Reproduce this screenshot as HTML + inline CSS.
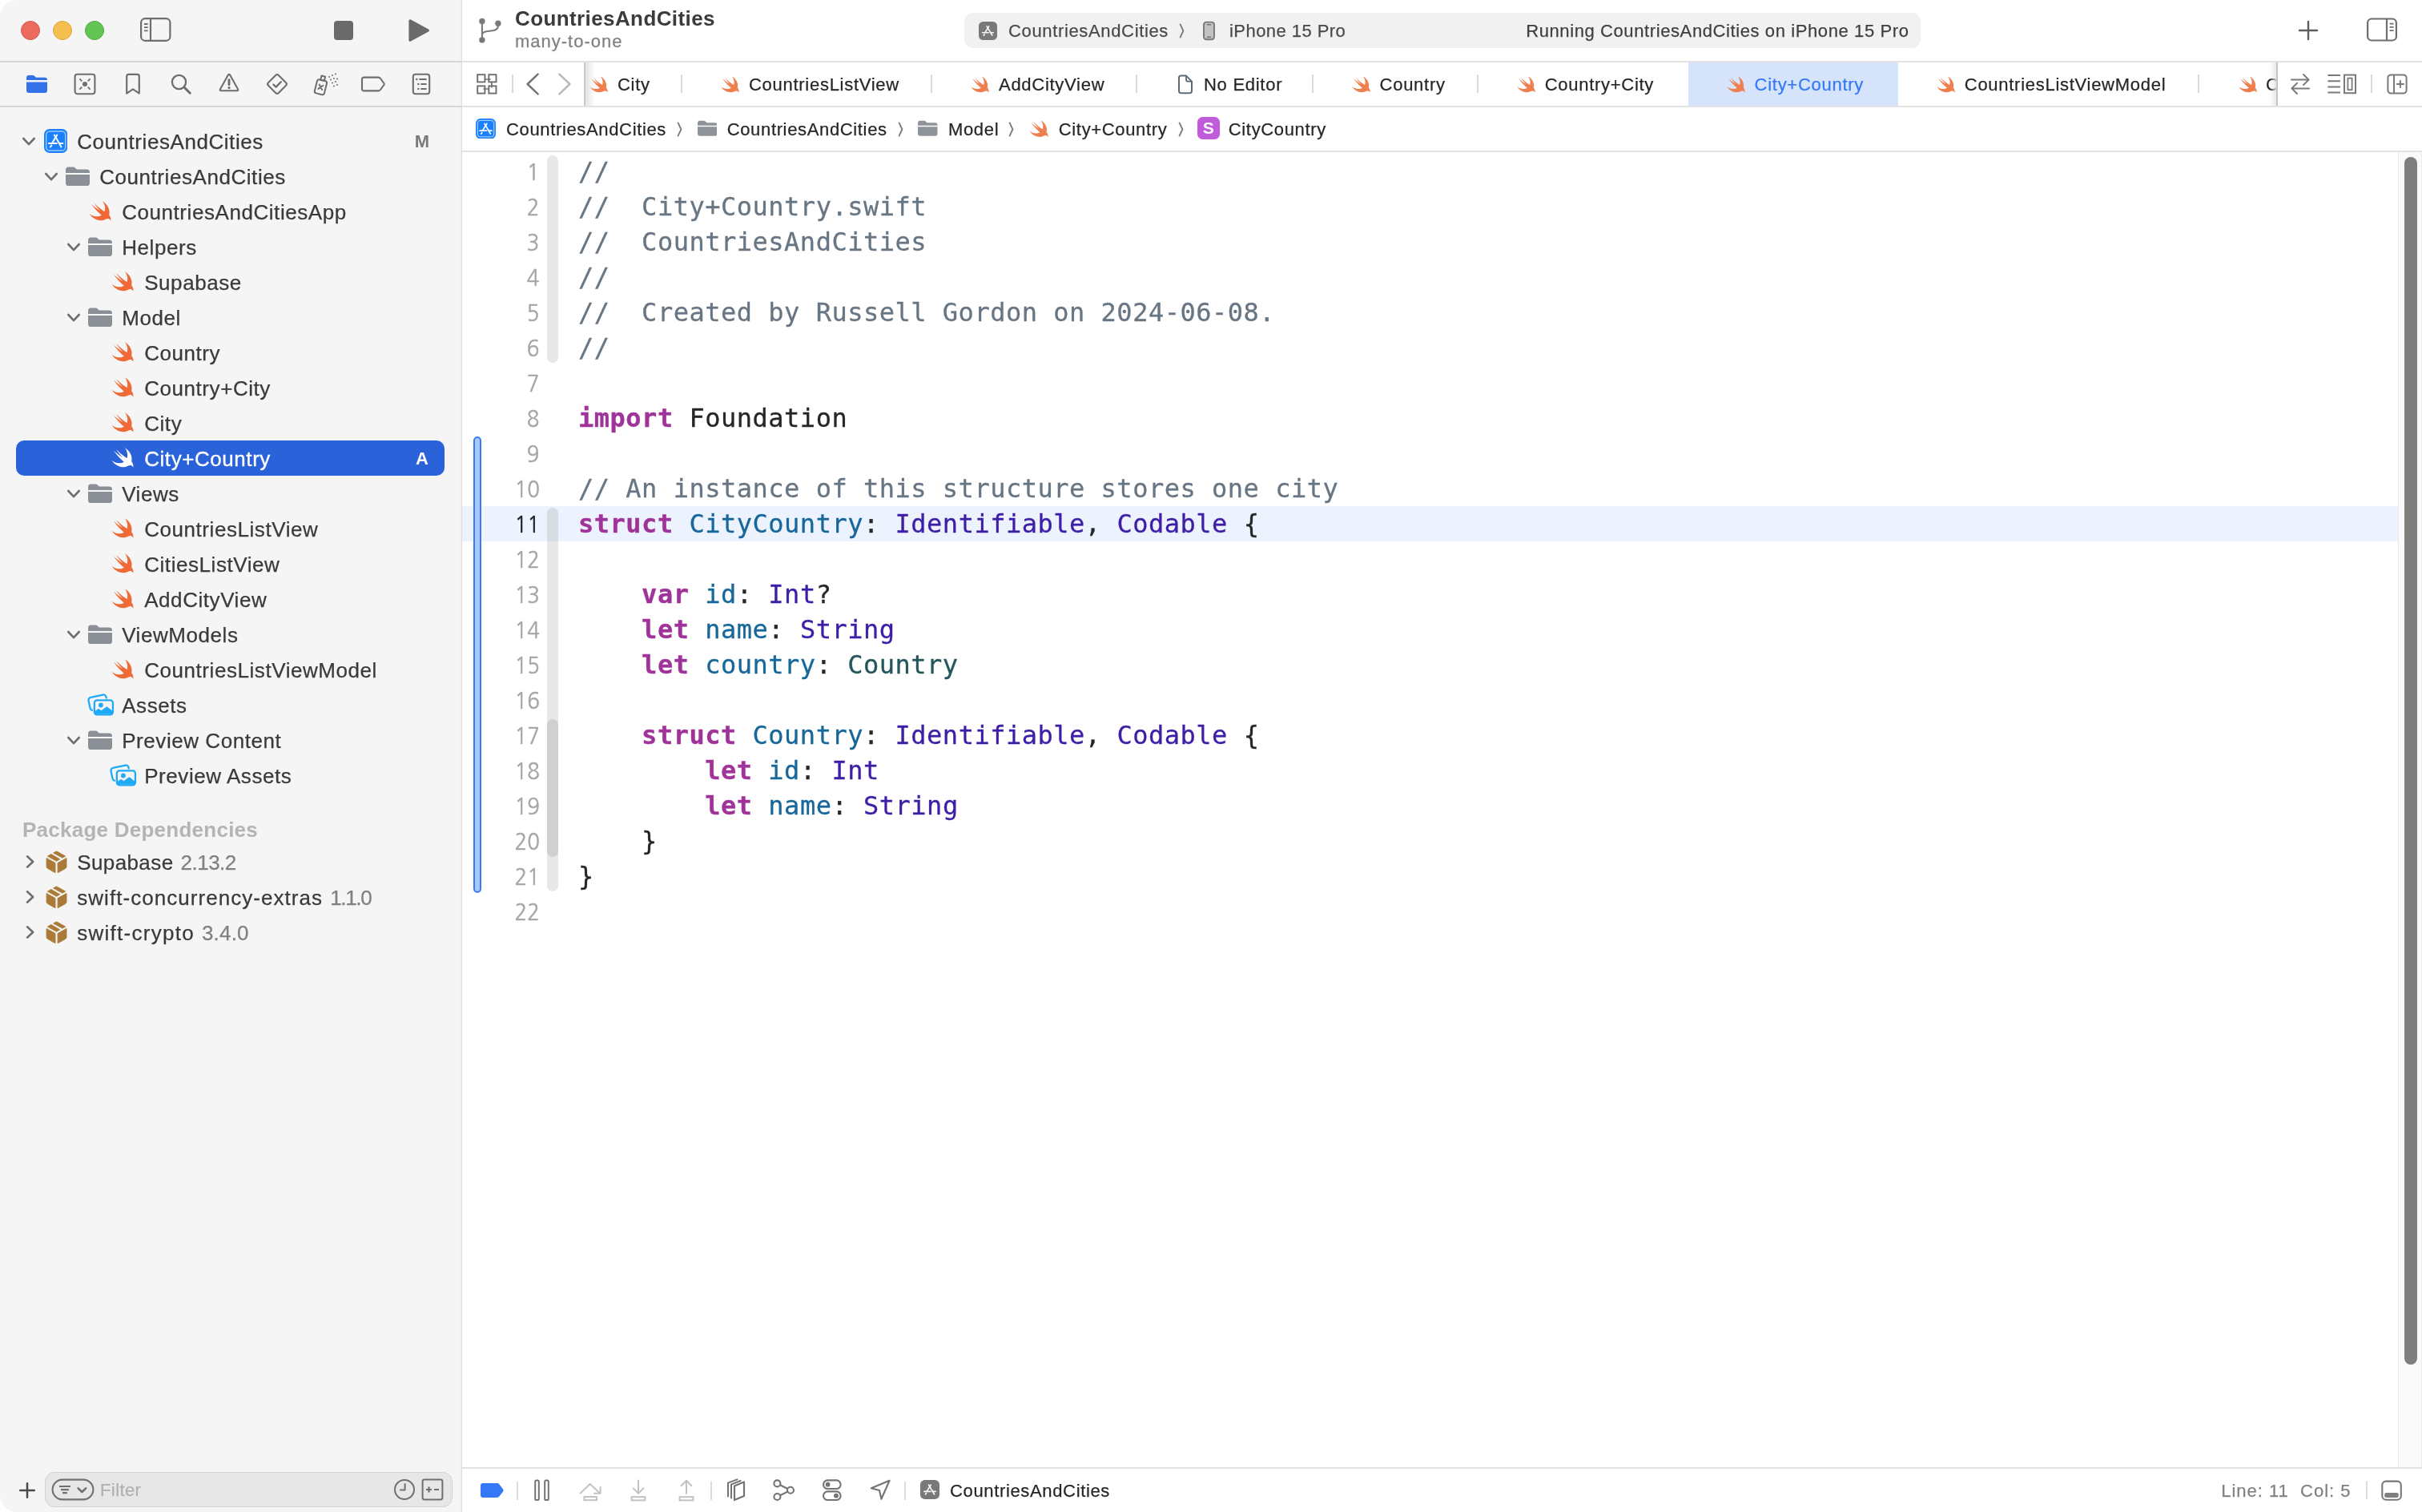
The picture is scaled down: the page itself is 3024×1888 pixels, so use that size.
<!DOCTYPE html>
<html><head><meta charset="utf-8"><title>CountriesAndCities — City+Country.swift</title>
<style>
html,body{margin:0;padding:0;background:#fff;}
body{width:3024px;height:1888px;position:relative;overflow:hidden;font-family:"Liberation Sans", "DejaVu Sans", sans-serif;}
#w{left:0;top:0;width:3024px;height:1888px;will-change:transform;}
div,span.t,svg{position:absolute;}
span.t{white-space:pre;-webkit-text-stroke:0.25px;}
.code{position:absolute;left:722px;height:44px;line-height:44px;font-family:"DejaVu Sans Mono", "Liberation Mono", monospace;font-size:32px;letter-spacing:0.51px;white-space:pre;color:#262626;-webkit-text-stroke:0.3px;}
.code b{font-weight:700;color:#a0339a;}
.c{color:#687683;} .d{color:#17679a;} .s{color:#3e1ea6;} .p{color:#23575c;}
.ln{position:absolute;right:2350.3px;height:44px;line-height:44px;font-family:"NanumGothic","Liberation Sans",sans-serif;font-size:28.7px;letter-spacing:0.2px;color:#a6a6a6;-webkit-text-stroke:0.55px;transform:scaleX(.9);transform-origin:100% 50%;}
</style></head><body><div id="w">

<div style="left:0px;top:0px;width:576px;height:1888px;background:linear-gradient(90deg,#f5f5f5 0,#f5f5f5 574px,#f0f0f0 576px);border-radius:21px 0 0 21px;"></div>
<div style="left:576px;top:0px;width:1px;height:1888px;background:#dedede;"></div>
<div style="left:0px;top:76px;width:576px;height:2px;background:#d5d5d5;"></div>
<div style="left:0px;top:132px;width:576px;height:2px;background:#d5d5d5;"></div>
<div style="left:577px;top:76px;width:2447px;height:2px;background:#e2e2e2;"></div>
<div style="left:577px;top:132px;width:2447px;height:2px;background:#e2e2e2;"></div>
<div style="left:577px;top:188px;width:2447px;height:2px;background:#e2e2e2;"></div>
<div style="left:577px;top:1832px;width:2447px;height:2px;background:#e2e2e2;"></div>
<div style="left:26px;top:26px;width:24px;height:24px;box-sizing:border-box;border-radius:50%;background:#ed6a5e;border:1px solid #d5564a;"></div>
<div style="left:66px;top:26px;width:24px;height:24px;box-sizing:border-box;border-radius:50%;background:#f5bf4f;border:1px solid #d9a33b;"></div>
<div style="left:106px;top:26px;width:24px;height:24px;box-sizing:border-box;border-radius:50%;background:#62c554;border:1px solid #4fa83e;"></div>
<svg style="left:174px;top:21px;" width="40" height="32" viewBox="0 0 40 32" ><g fill="none" stroke="#6e6e6e" stroke-width="2.2"><rect x="2.1" y="2.2" width="36.3" height="27.6" rx="5"/><path d="M14 2.2 V29.8"/><path d="M6 9 H10.6 M6 13.2 H10.6 M6 17.4 H10.6" stroke-width="1.8"/></g></svg>
<div style="left:417px;top:26px;width:24px;height:24px;background:#6a6a6a;border-radius:4px;"></div>
<svg style="left:506px;top:20px;" width="36" height="36" viewBox="0 0 36 36" ><path d="M6.1 5.9 L28.2 18 L6.1 30.1 Z" fill="#6a6a6a" stroke="#6a6a6a" stroke-width="3.4" stroke-linejoin="round"/></svg>
<svg style="left:33px;top:93px;" width="26" height="24" viewBox="0 0 26 24" ><path d="M0 4 Q0 1 3 1 L7.6 1 Q9.2 1 10.2 2 L11.4 3.2 Q12 3.8 13 3.8 L23 3.8 Q26 3.8 26 6.8 L26 7 L0 7 Z" fill="#3372e8"/><path d="M0 9.4 H26 V20 Q26 23 23 23 H3 Q0 23 0 20 Z" fill="#3372e8"/></svg>
<svg style="left:92px;top:91px;" width="28" height="28" viewBox="0 0 28 28" ><g fill="none" stroke="#6e6e6e" stroke-width="2.1" stroke-linecap="round"><rect x="1.6" y="1.8" width="24.8" height="24.4" rx="3"/><path d="M7.4 7.4 L10.3 10.3 M20.6 7.4 L17.7 10.3 M7.4 20.6 L10.3 17.7 M20.6 20.6 L17.7 17.7" stroke-width="1.8" stroke-linecap="butt"/></g><circle cx="14" cy="14" r="3" fill="#6e6e6e"/></svg>
<svg style="left:156px;top:91px;" width="20" height="28" viewBox="0 0 20 28" ><path d="M2.2 4.4 Q2.2 1.9 4.7 1.9 H15.3 Q17.8 1.9 17.8 4.4 V25.6 L10 20.4 L2.2 25.6 Z" fill="none" stroke="#6e6e6e" stroke-width="2.2" stroke-linejoin="round"/></svg>
<svg style="left:212px;top:91px;" width="28" height="28" viewBox="0 0 28 28" ><g fill="none" stroke="#6e6e6e" stroke-linecap="round"><circle cx="11.5" cy="11.5" r="8.6" stroke-width="2.3"/><path d="M18 18 L25.2 25.2" stroke-width="3"/></g></svg>
<svg style="left:272px;top:90px;" width="28" height="28" viewBox="0 0 28 28" ><path d="M12.9 3.6 Q14 1.8 15.1 3.6 L25 21.2 Q26 23.2 23.8 23.2 H4.2 Q2 23.2 3 21.2 Z" fill="none" stroke="#6e6e6e" stroke-width="2.1" stroke-linejoin="round"/><path d="M14 9.6 V15.8" stroke="#6e6e6e" stroke-width="2.9" stroke-linecap="round"/><circle cx="14" cy="19.6" r="1.6" fill="#6e6e6e"/></svg>
<svg style="left:331px;top:90px;" width="30" height="30" viewBox="0 0 30 30" ><g fill="none" stroke="#6e6e6e" stroke-width="2.1" stroke-linejoin="round" stroke-linecap="round"><rect x="5.9" y="5.9" width="18.2" height="18.2" rx="2.6" transform="rotate(45 15 15)"/><path d="M10.4 15.6 L13.6 18.6 L19.8 12.2" stroke-width="2.3"/></g></svg>
<svg style="left:390px;top:90px;" width="34" height="30" viewBox="0 0 34 30" ><g fill="none" stroke="#6e6e6e" stroke-width="2" stroke-linejoin="round" stroke-linecap="round"><g transform="rotate(14 10 18)"><rect x="4.4" y="10" width="12.4" height="17.4" rx="2.4"/><rect x="8.2" y="4.6" width="4.8" height="5.2"/><path d="M8.2 16 L13 21.4 M13 16 L8.2 21.4"/></g></g><g fill="#6e6e6e"><circle cx="21" cy="6" r="1"/><circle cx="25" cy="4" r="1"/><circle cx="29" cy="2.4" r="1"/><circle cx="23" cy="9.6" r="1"/><circle cx="27" cy="8" r="1"/><circle cx="31" cy="8.4" r="1"/><circle cx="25" cy="13.4" r="1"/><circle cx="29" cy="12" r="1"/><circle cx="27" cy="17.4" r="1"/><circle cx="31" cy="16" r="1"/></g></svg>
<svg style="left:450px;top:94px;" width="32" height="22" viewBox="0 0 32 22" ><path d="M4.4 2.6 H22.4 Q24 2.6 25 4 L29.4 10 Q30 11 29.4 12 L25 18 Q24 19.4 22.4 19.4 H4.4 Q2 19.4 2 17 V5 Q2 2.6 4.4 2.6 Z" fill="none" stroke="#6e6e6e" stroke-width="2.1" stroke-linejoin="round"/></svg>
<svg style="left:514px;top:91px;" width="24" height="28" viewBox="0 0 24 28" ><g fill="none" stroke="#6e6e6e" stroke-width="2.1" stroke-linecap="round"><rect x="1.8" y="1.8" width="20.4" height="24.4" rx="3"/><path d="M10.2 8 H17.8 M12.2 14 H17.8 M12.2 20 H17.8" stroke-width="2.2"/></g><g fill="#6e6e6e"><rect x="5.2" y="6.9" width="2.2" height="2.2"/><rect x="7.2" y="12.9" width="2.2" height="2.2"/><rect x="7.2" y="18.9" width="2.2" height="2.2"/></g></svg>
<svg style="left:27px;top:171px;" width="18" height="12" viewBox="0 0 18 12" ><path d="M2.3 2 L9 9.2 L15.7 2" fill="none" stroke="#6e6e6e" stroke-width="2.6" stroke-linecap="round" stroke-linejoin="round"/></svg>
<svg style="left:54.8px;top:160.9px;" width="29.4" height="30.0" viewBox="0 0 29.4 30" preserveAspectRatio="none"><rect x="0" y="0" width="29.4" height="30" rx="7" fill="#1a80fb"/><rect x="2.7" y="2.9" width="24" height="24.2" rx="4.4" fill="none" stroke="#ffffff" stroke-width="1.5" opacity="0.56"/><g stroke="#ffffff" stroke-width="2.05" stroke-linecap="round" fill="none" opacity="0.96"><path d="M16.2 7.6 L10.5 17"/><path d="M9.2 20.6 L8 22.5"/><path d="M12.9 7.6 L21.5 22.4"/><path d="M5.9 18 H15.8 M19 18 H23.4"/></g></svg>
<span class="t" style="left:96.2px;top:159.8px;font-size:26px;line-height:34px;color:#3a3a3a;font-weight:400;letter-spacing:0.56px;">CountriesAndCities</span>
<span class="t" style="right:2488px;top:161.5px;font-size:22px;line-height:29px;color:#7a7a7a;font-weight:700;letter-spacing:0px;-webkit-text-stroke:0;">M</span>
<svg style="left:55px;top:215px;" width="18" height="12" viewBox="0 0 18 12" ><path d="M2.3 2 L9 9.2 L15.7 2" fill="none" stroke="#6e6e6e" stroke-width="2.6" stroke-linecap="round" stroke-linejoin="round"/></svg>
<svg style="left:82px;top:208px;" width="30" height="24" viewBox="0 0 30 24" ><path d="M0 4.2 Q0 0.6 3.6 0.6 L9.2 0.6 Q11 0.6 12.2 1.9 L13.2 3 Q13.8 3.6 14.8 3.6 L26.4 3.6 Q30 3.6 30 7.2 L30 8 L0 8 Z" fill="#8a9096"/><path d="M0 10 L30 10 L30 20.4 Q30 24 26.4 24 L3.6 24 Q0 24 0 20.4 Z" fill="#8a9096"/></svg>
<span class="t" style="left:124.2px;top:203.8px;font-size:26px;line-height:34px;color:#3a3a3a;font-weight:400;letter-spacing:0.56px;">CountriesAndCities</span>
<svg style="left:111px;top:251px;overflow:visible;" width="28" height="25" viewBox="2.3 3.3 18.5 16.7" ><path d="M13.543 3.41c4.114 2.47 6.545 7.162 5.549 11.131-.024.093-.05.181-.076.272l.002.001c2.062 2.538 1.5 5.258 1.236 4.745-1.072-2.086-3.066-1.568-4.088-1.043a6.803 6.803 0 0 1-.281.158l-.02.012-.002.002c-2.115 1.123-4.957 1.205-7.812-.022a12.568 12.568 0 0 1-5.64-4.838c.649.48 1.35.902 2.097 1.252 3.019 1.414 6.051 1.311 8.197-.002C9.651 12.73 7.101 9.67 5.146 7.191a10.628 10.628 0 0 1-1.005-1.384c2.34 2.142 6.038 4.83 7.365 5.576C8.69 8.408 6.208 4.743 6.324 4.86c4.436 4.47 8.528 6.996 8.528 6.996.154.085.27.154.36.213.085-.215.16-.437.224-.668.708-2.588-.09-5.548-1.893-7.992z" fill="#f06a37"/></svg>
<span class="t" style="left:152.2px;top:247.8px;font-size:26px;line-height:34px;color:#3a3a3a;font-weight:400;letter-spacing:0.56px;">CountriesAndCitiesApp</span>
<svg style="left:83px;top:303px;" width="18" height="12" viewBox="0 0 18 12" ><path d="M2.3 2 L9 9.2 L15.7 2" fill="none" stroke="#6e6e6e" stroke-width="2.6" stroke-linecap="round" stroke-linejoin="round"/></svg>
<svg style="left:110px;top:296px;" width="30" height="24" viewBox="0 0 30 24" ><path d="M0 4.2 Q0 0.6 3.6 0.6 L9.2 0.6 Q11 0.6 12.2 1.9 L13.2 3 Q13.8 3.6 14.8 3.6 L26.4 3.6 Q30 3.6 30 7.2 L30 8 L0 8 Z" fill="#8a9096"/><path d="M0 10 L30 10 L30 20.4 Q30 24 26.4 24 L3.6 24 Q0 24 0 20.4 Z" fill="#8a9096"/></svg>
<span class="t" style="left:152.2px;top:291.8px;font-size:26px;line-height:34px;color:#3a3a3a;font-weight:400;letter-spacing:0.56px;">Helpers</span>
<svg style="left:139px;top:339px;overflow:visible;" width="28" height="25" viewBox="2.3 3.3 18.5 16.7" ><path d="M13.543 3.41c4.114 2.47 6.545 7.162 5.549 11.131-.024.093-.05.181-.076.272l.002.001c2.062 2.538 1.5 5.258 1.236 4.745-1.072-2.086-3.066-1.568-4.088-1.043a6.803 6.803 0 0 1-.281.158l-.02.012-.002.002c-2.115 1.123-4.957 1.205-7.812-.022a12.568 12.568 0 0 1-5.64-4.838c.649.48 1.35.902 2.097 1.252 3.019 1.414 6.051 1.311 8.197-.002C9.651 12.73 7.101 9.67 5.146 7.191a10.628 10.628 0 0 1-1.005-1.384c2.34 2.142 6.038 4.83 7.365 5.576C8.69 8.408 6.208 4.743 6.324 4.86c4.436 4.47 8.528 6.996 8.528 6.996.154.085.27.154.36.213.085-.215.16-.437.224-.668.708-2.588-.09-5.548-1.893-7.992z" fill="#f06a37"/></svg>
<span class="t" style="left:180.2px;top:335.8px;font-size:26px;line-height:34px;color:#3a3a3a;font-weight:400;letter-spacing:0.56px;">Supabase</span>
<svg style="left:83px;top:391px;" width="18" height="12" viewBox="0 0 18 12" ><path d="M2.3 2 L9 9.2 L15.7 2" fill="none" stroke="#6e6e6e" stroke-width="2.6" stroke-linecap="round" stroke-linejoin="round"/></svg>
<svg style="left:110px;top:384px;" width="30" height="24" viewBox="0 0 30 24" ><path d="M0 4.2 Q0 0.6 3.6 0.6 L9.2 0.6 Q11 0.6 12.2 1.9 L13.2 3 Q13.8 3.6 14.8 3.6 L26.4 3.6 Q30 3.6 30 7.2 L30 8 L0 8 Z" fill="#8a9096"/><path d="M0 10 L30 10 L30 20.4 Q30 24 26.4 24 L3.6 24 Q0 24 0 20.4 Z" fill="#8a9096"/></svg>
<span class="t" style="left:152.2px;top:379.8px;font-size:26px;line-height:34px;color:#3a3a3a;font-weight:400;letter-spacing:0.56px;">Model</span>
<svg style="left:139px;top:427px;overflow:visible;" width="28" height="25" viewBox="2.3 3.3 18.5 16.7" ><path d="M13.543 3.41c4.114 2.47 6.545 7.162 5.549 11.131-.024.093-.05.181-.076.272l.002.001c2.062 2.538 1.5 5.258 1.236 4.745-1.072-2.086-3.066-1.568-4.088-1.043a6.803 6.803 0 0 1-.281.158l-.02.012-.002.002c-2.115 1.123-4.957 1.205-7.812-.022a12.568 12.568 0 0 1-5.64-4.838c.649.48 1.35.902 2.097 1.252 3.019 1.414 6.051 1.311 8.197-.002C9.651 12.73 7.101 9.67 5.146 7.191a10.628 10.628 0 0 1-1.005-1.384c2.34 2.142 6.038 4.83 7.365 5.576C8.69 8.408 6.208 4.743 6.324 4.86c4.436 4.47 8.528 6.996 8.528 6.996.154.085.27.154.36.213.085-.215.16-.437.224-.668.708-2.588-.09-5.548-1.893-7.992z" fill="#f06a37"/></svg>
<span class="t" style="left:180.2px;top:423.8px;font-size:26px;line-height:34px;color:#3a3a3a;font-weight:400;letter-spacing:0.56px;">Country</span>
<svg style="left:139px;top:471px;overflow:visible;" width="28" height="25" viewBox="2.3 3.3 18.5 16.7" ><path d="M13.543 3.41c4.114 2.47 6.545 7.162 5.549 11.131-.024.093-.05.181-.076.272l.002.001c2.062 2.538 1.5 5.258 1.236 4.745-1.072-2.086-3.066-1.568-4.088-1.043a6.803 6.803 0 0 1-.281.158l-.02.012-.002.002c-2.115 1.123-4.957 1.205-7.812-.022a12.568 12.568 0 0 1-5.64-4.838c.649.48 1.35.902 2.097 1.252 3.019 1.414 6.051 1.311 8.197-.002C9.651 12.73 7.101 9.67 5.146 7.191a10.628 10.628 0 0 1-1.005-1.384c2.34 2.142 6.038 4.83 7.365 5.576C8.69 8.408 6.208 4.743 6.324 4.86c4.436 4.47 8.528 6.996 8.528 6.996.154.085.27.154.36.213.085-.215.16-.437.224-.668.708-2.588-.09-5.548-1.893-7.992z" fill="#f06a37"/></svg>
<span class="t" style="left:180.2px;top:467.8px;font-size:26px;line-height:34px;color:#3a3a3a;font-weight:400;letter-spacing:0.56px;">Country+City</span>
<svg style="left:139px;top:515px;overflow:visible;" width="28" height="25" viewBox="2.3 3.3 18.5 16.7" ><path d="M13.543 3.41c4.114 2.47 6.545 7.162 5.549 11.131-.024.093-.05.181-.076.272l.002.001c2.062 2.538 1.5 5.258 1.236 4.745-1.072-2.086-3.066-1.568-4.088-1.043a6.803 6.803 0 0 1-.281.158l-.02.012-.002.002c-2.115 1.123-4.957 1.205-7.812-.022a12.568 12.568 0 0 1-5.64-4.838c.649.48 1.35.902 2.097 1.252 3.019 1.414 6.051 1.311 8.197-.002C9.651 12.73 7.101 9.67 5.146 7.191a10.628 10.628 0 0 1-1.005-1.384c2.34 2.142 6.038 4.83 7.365 5.576C8.69 8.408 6.208 4.743 6.324 4.86c4.436 4.47 8.528 6.996 8.528 6.996.154.085.27.154.36.213.085-.215.16-.437.224-.668.708-2.588-.09-5.548-1.893-7.992z" fill="#f06a37"/></svg>
<span class="t" style="left:180.2px;top:511.79999999999995px;font-size:26px;line-height:34px;color:#3a3a3a;font-weight:400;letter-spacing:0.56px;">City</span>
<div style="left:20px;top:550px;width:535px;height:44px;background:#2962d9;border-radius:10px;"></div>
<svg style="left:139px;top:559px;overflow:visible;" width="28" height="25" viewBox="2.3 3.3 18.5 16.7" ><path d="M13.543 3.41c4.114 2.47 6.545 7.162 5.549 11.131-.024.093-.05.181-.076.272l.002.001c2.062 2.538 1.5 5.258 1.236 4.745-1.072-2.086-3.066-1.568-4.088-1.043a6.803 6.803 0 0 1-.281.158l-.02.012-.002.002c-2.115 1.123-4.957 1.205-7.812-.022a12.568 12.568 0 0 1-5.64-4.838c.649.48 1.35.902 2.097 1.252 3.019 1.414 6.051 1.311 8.197-.002C9.651 12.73 7.101 9.67 5.146 7.191a10.628 10.628 0 0 1-1.005-1.384c2.34 2.142 6.038 4.83 7.365 5.576C8.69 8.408 6.208 4.743 6.324 4.86c4.436 4.47 8.528 6.996 8.528 6.996.154.085.27.154.36.213.085-.215.16-.437.224-.668.708-2.588-.09-5.548-1.893-7.992z" fill="#ffffff"/></svg>
<span class="t" style="left:180.2px;top:555.8px;font-size:26px;line-height:34px;color:#ffffff;font-weight:400;letter-spacing:0.56px;-webkit-text-stroke:0.3px;">City+Country</span>
<span class="t" style="right:2489px;top:557.5px;font-size:22px;line-height:29px;color:#ffffff;font-weight:700;letter-spacing:0px;-webkit-text-stroke:0;">A</span>
<svg style="left:83px;top:611px;" width="18" height="12" viewBox="0 0 18 12" ><path d="M2.3 2 L9 9.2 L15.7 2" fill="none" stroke="#6e6e6e" stroke-width="2.6" stroke-linecap="round" stroke-linejoin="round"/></svg>
<svg style="left:110px;top:604px;" width="30" height="24" viewBox="0 0 30 24" ><path d="M0 4.2 Q0 0.6 3.6 0.6 L9.2 0.6 Q11 0.6 12.2 1.9 L13.2 3 Q13.8 3.6 14.8 3.6 L26.4 3.6 Q30 3.6 30 7.2 L30 8 L0 8 Z" fill="#8a9096"/><path d="M0 10 L30 10 L30 20.4 Q30 24 26.4 24 L3.6 24 Q0 24 0 20.4 Z" fill="#8a9096"/></svg>
<span class="t" style="left:152.2px;top:599.8px;font-size:26px;line-height:34px;color:#3a3a3a;font-weight:400;letter-spacing:0.56px;">Views</span>
<svg style="left:139px;top:647px;overflow:visible;" width="28" height="25" viewBox="2.3 3.3 18.5 16.7" ><path d="M13.543 3.41c4.114 2.47 6.545 7.162 5.549 11.131-.024.093-.05.181-.076.272l.002.001c2.062 2.538 1.5 5.258 1.236 4.745-1.072-2.086-3.066-1.568-4.088-1.043a6.803 6.803 0 0 1-.281.158l-.02.012-.002.002c-2.115 1.123-4.957 1.205-7.812-.022a12.568 12.568 0 0 1-5.64-4.838c.649.48 1.35.902 2.097 1.252 3.019 1.414 6.051 1.311 8.197-.002C9.651 12.73 7.101 9.67 5.146 7.191a10.628 10.628 0 0 1-1.005-1.384c2.34 2.142 6.038 4.83 7.365 5.576C8.69 8.408 6.208 4.743 6.324 4.86c4.436 4.47 8.528 6.996 8.528 6.996.154.085.27.154.36.213.085-.215.16-.437.224-.668.708-2.588-.09-5.548-1.893-7.992z" fill="#f06a37"/></svg>
<span class="t" style="left:180.2px;top:643.8px;font-size:26px;line-height:34px;color:#3a3a3a;font-weight:400;letter-spacing:0.56px;">CountriesListView</span>
<svg style="left:139px;top:691px;overflow:visible;" width="28" height="25" viewBox="2.3 3.3 18.5 16.7" ><path d="M13.543 3.41c4.114 2.47 6.545 7.162 5.549 11.131-.024.093-.05.181-.076.272l.002.001c2.062 2.538 1.5 5.258 1.236 4.745-1.072-2.086-3.066-1.568-4.088-1.043a6.803 6.803 0 0 1-.281.158l-.02.012-.002.002c-2.115 1.123-4.957 1.205-7.812-.022a12.568 12.568 0 0 1-5.64-4.838c.649.48 1.35.902 2.097 1.252 3.019 1.414 6.051 1.311 8.197-.002C9.651 12.73 7.101 9.67 5.146 7.191a10.628 10.628 0 0 1-1.005-1.384c2.34 2.142 6.038 4.83 7.365 5.576C8.69 8.408 6.208 4.743 6.324 4.86c4.436 4.47 8.528 6.996 8.528 6.996.154.085.27.154.36.213.085-.215.16-.437.224-.668.708-2.588-.09-5.548-1.893-7.992z" fill="#f06a37"/></svg>
<span class="t" style="left:180.2px;top:687.8px;font-size:26px;line-height:34px;color:#3a3a3a;font-weight:400;letter-spacing:0.56px;">CitiesListView</span>
<svg style="left:139px;top:735px;overflow:visible;" width="28" height="25" viewBox="2.3 3.3 18.5 16.7" ><path d="M13.543 3.41c4.114 2.47 6.545 7.162 5.549 11.131-.024.093-.05.181-.076.272l.002.001c2.062 2.538 1.5 5.258 1.236 4.745-1.072-2.086-3.066-1.568-4.088-1.043a6.803 6.803 0 0 1-.281.158l-.02.012-.002.002c-2.115 1.123-4.957 1.205-7.812-.022a12.568 12.568 0 0 1-5.64-4.838c.649.48 1.35.902 2.097 1.252 3.019 1.414 6.051 1.311 8.197-.002C9.651 12.73 7.101 9.67 5.146 7.191a10.628 10.628 0 0 1-1.005-1.384c2.34 2.142 6.038 4.83 7.365 5.576C8.69 8.408 6.208 4.743 6.324 4.86c4.436 4.47 8.528 6.996 8.528 6.996.154.085.27.154.36.213.085-.215.16-.437.224-.668.708-2.588-.09-5.548-1.893-7.992z" fill="#f06a37"/></svg>
<span class="t" style="left:180.2px;top:731.8px;font-size:26px;line-height:34px;color:#3a3a3a;font-weight:400;letter-spacing:0.56px;">AddCityView</span>
<svg style="left:83px;top:787px;" width="18" height="12" viewBox="0 0 18 12" ><path d="M2.3 2 L9 9.2 L15.7 2" fill="none" stroke="#6e6e6e" stroke-width="2.6" stroke-linecap="round" stroke-linejoin="round"/></svg>
<svg style="left:110px;top:780px;" width="30" height="24" viewBox="0 0 30 24" ><path d="M0 4.2 Q0 0.6 3.6 0.6 L9.2 0.6 Q11 0.6 12.2 1.9 L13.2 3 Q13.8 3.6 14.8 3.6 L26.4 3.6 Q30 3.6 30 7.2 L30 8 L0 8 Z" fill="#8a9096"/><path d="M0 10 L30 10 L30 20.4 Q30 24 26.4 24 L3.6 24 Q0 24 0 20.4 Z" fill="#8a9096"/></svg>
<span class="t" style="left:152.2px;top:775.8px;font-size:26px;line-height:34px;color:#3a3a3a;font-weight:400;letter-spacing:0.56px;">ViewModels</span>
<svg style="left:139px;top:823px;overflow:visible;" width="28" height="25" viewBox="2.3 3.3 18.5 16.7" ><path d="M13.543 3.41c4.114 2.47 6.545 7.162 5.549 11.131-.024.093-.05.181-.076.272l.002.001c2.062 2.538 1.5 5.258 1.236 4.745-1.072-2.086-3.066-1.568-4.088-1.043a6.803 6.803 0 0 1-.281.158l-.02.012-.002.002c-2.115 1.123-4.957 1.205-7.812-.022a12.568 12.568 0 0 1-5.64-4.838c.649.48 1.35.902 2.097 1.252 3.019 1.414 6.051 1.311 8.197-.002C9.651 12.73 7.101 9.67 5.146 7.191a10.628 10.628 0 0 1-1.005-1.384c2.34 2.142 6.038 4.83 7.365 5.576C8.69 8.408 6.208 4.743 6.324 4.86c4.436 4.47 8.528 6.996 8.528 6.996.154.085.27.154.36.213.085-.215.16-.437.224-.668.708-2.588-.09-5.548-1.893-7.992z" fill="#f06a37"/></svg>
<span class="t" style="left:180.2px;top:819.8px;font-size:26px;line-height:34px;color:#3a3a3a;font-weight:400;letter-spacing:0.56px;">CountriesListViewModel</span>
<svg style="left:109px;top:865.5px;" width="34" height="28" viewBox="0 0 34 28" ><rect x="2.3" y="3.0" width="22.4" height="16.4" rx="3.3" fill="none" stroke="#1faaf6" stroke-width="2.3" transform="rotate(-12 13.5 11.2)"/><rect x="6.9" y="6.5" width="27" height="22" rx="5" fill="#f5f5f5"/><rect x="8.85" y="8.45" width="23.1" height="17.9" rx="3.3" fill="#f5f5f5" stroke="#1faaf6" stroke-width="2.3"/><circle cx="16.9" cy="14.5" r="2.9" fill="#1faaf6"/><path d="M9.6 22 L13.4 19.2 Q14.1 18.7 14.8 19.2 L17.4 21.2 L23.6 16.8 Q24.4 16.2 25.2 16.8 L31.2 21.4 V25.6 H9.6 Z" fill="#1faaf6"/></svg>
<span class="t" style="left:152.2px;top:863.8px;font-size:26px;line-height:34px;color:#3a3a3a;font-weight:400;letter-spacing:0.56px;">Assets</span>
<svg style="left:83px;top:919px;" width="18" height="12" viewBox="0 0 18 12" ><path d="M2.3 2 L9 9.2 L15.7 2" fill="none" stroke="#6e6e6e" stroke-width="2.6" stroke-linecap="round" stroke-linejoin="round"/></svg>
<svg style="left:110px;top:912px;" width="30" height="24" viewBox="0 0 30 24" ><path d="M0 4.2 Q0 0.6 3.6 0.6 L9.2 0.6 Q11 0.6 12.2 1.9 L13.2 3 Q13.8 3.6 14.8 3.6 L26.4 3.6 Q30 3.6 30 7.2 L30 8 L0 8 Z" fill="#8a9096"/><path d="M0 10 L30 10 L30 20.4 Q30 24 26.4 24 L3.6 24 Q0 24 0 20.4 Z" fill="#8a9096"/></svg>
<span class="t" style="left:152.2px;top:907.8px;font-size:26px;line-height:34px;color:#3a3a3a;font-weight:400;letter-spacing:0.56px;">Preview Content</span>
<svg style="left:137px;top:953.5px;" width="34" height="28" viewBox="0 0 34 28" ><rect x="2.3" y="3.0" width="22.4" height="16.4" rx="3.3" fill="none" stroke="#1faaf6" stroke-width="2.3" transform="rotate(-12 13.5 11.2)"/><rect x="6.9" y="6.5" width="27" height="22" rx="5" fill="#f5f5f5"/><rect x="8.85" y="8.45" width="23.1" height="17.9" rx="3.3" fill="#f5f5f5" stroke="#1faaf6" stroke-width="2.3"/><circle cx="16.9" cy="14.5" r="2.9" fill="#1faaf6"/><path d="M9.6 22 L13.4 19.2 Q14.1 18.7 14.8 19.2 L17.4 21.2 L23.6 16.8 Q24.4 16.2 25.2 16.8 L31.2 21.4 V25.6 H9.6 Z" fill="#1faaf6"/></svg>
<span class="t" style="left:180.2px;top:951.8px;font-size:26px;line-height:34px;color:#3a3a3a;font-weight:400;letter-spacing:0.56px;">Preview Assets</span>
<span class="t" style="left:28px;top:1018.5px;font-size:26px;line-height:34px;color:#b4b4b4;font-weight:700;letter-spacing:0.25px;-webkit-text-stroke:0;">Package Dependencies</span>
<svg style="left:31.9px;top:1066.5px;" width="12" height="18" viewBox="0 0 12 18" ><path d="M2 2.3 L9.2 9 L2 15.7" fill="none" stroke="#6e6e6e" stroke-width="2.6" stroke-linecap="round" stroke-linejoin="round"/></svg>
<svg style="left:56.5px;top:1061.5px;" width="27" height="29" viewBox="0 0 27 29" ><g fill="#ab7a39" stroke="#ab7a39" stroke-width="0.9" stroke-linejoin="round"><path d="M1.1 9.5 L12 15.6 V27.8 L2.6 22.6 Q1.1 21.7 1.1 20.2 Z"/><path d="M26 9.5 L15.1 15.6 V27.8 L24.5 22.6 Q26 21.7 26 20.2 Z"/><path d="M9.6 3 L12.4 1.4 Q13.5 0.8 14.6 1.4 L24.7 7.1 L20.9 9.2 Z"/><path d="M2.3 7.1 L6.9 4.5 L17.8 10.9 L13.5 13.3 Z"/></g></svg>
<span class="t" style="left:96.2px;top:1059.8px;font-size:26px;line-height:34px;color:#3a3a3a;letter-spacing:0.4px;">Supabase<span style="color:#808080;margin-left:9px;letter-spacing:-0.5px;">2.13.2</span></span>
<svg style="left:31.9px;top:1110.5px;" width="12" height="18" viewBox="0 0 12 18" ><path d="M2 2.3 L9.2 9 L2 15.7" fill="none" stroke="#6e6e6e" stroke-width="2.6" stroke-linecap="round" stroke-linejoin="round"/></svg>
<svg style="left:56.5px;top:1105.5px;" width="27" height="29" viewBox="0 0 27 29" ><g fill="#ab7a39" stroke="#ab7a39" stroke-width="0.9" stroke-linejoin="round"><path d="M1.1 9.5 L12 15.6 V27.8 L2.6 22.6 Q1.1 21.7 1.1 20.2 Z"/><path d="M26 9.5 L15.1 15.6 V27.8 L24.5 22.6 Q26 21.7 26 20.2 Z"/><path d="M9.6 3 L12.4 1.4 Q13.5 0.8 14.6 1.4 L24.7 7.1 L20.9 9.2 Z"/><path d="M2.3 7.1 L6.9 4.5 L17.8 10.9 L13.5 13.3 Z"/></g></svg>
<span class="t" style="left:96.2px;top:1103.8px;font-size:26px;line-height:34px;color:#3a3a3a;letter-spacing:1.05px;">swift-concurrency-extras<span style="color:#808080;margin-left:9px;letter-spacing:-1.3px;">1.1.0</span></span>
<svg style="left:31.9px;top:1154.5px;" width="12" height="18" viewBox="0 0 12 18" ><path d="M2 2.3 L9.2 9 L2 15.7" fill="none" stroke="#6e6e6e" stroke-width="2.6" stroke-linecap="round" stroke-linejoin="round"/></svg>
<svg style="left:56.5px;top:1149.5px;" width="27" height="29" viewBox="0 0 27 29" ><g fill="#ab7a39" stroke="#ab7a39" stroke-width="0.9" stroke-linejoin="round"><path d="M1.1 9.5 L12 15.6 V27.8 L2.6 22.6 Q1.1 21.7 1.1 20.2 Z"/><path d="M26 9.5 L15.1 15.6 V27.8 L24.5 22.6 Q26 21.7 26 20.2 Z"/><path d="M9.6 3 L12.4 1.4 Q13.5 0.8 14.6 1.4 L24.7 7.1 L20.9 9.2 Z"/><path d="M2.3 7.1 L6.9 4.5 L17.8 10.9 L13.5 13.3 Z"/></g></svg>
<span class="t" style="left:96.2px;top:1147.8px;font-size:26px;line-height:34px;color:#3a3a3a;letter-spacing:1.27px;">swift-crypto<span style="color:#808080;margin-left:9px;letter-spacing:0.2px;">3.4.0</span></span>
<svg style="left:21.4px;top:1847.5px;" width="26" height="26" viewBox="0 0 26 26" ><path d="M13 4.2 V21.8 M4.2 13 H21.8" stroke="#4a4a4a" stroke-width="2.5" stroke-linecap="round"/></svg>
<div style="left:56px;top:1838px;width:509px;height:44px;box-sizing:border-box;background:#e7e7e7;border:1.5px solid #d3d3d3;border-radius:12px;"></div>
<svg style="left:64px;top:1846px;" width="54" height="28" viewBox="0 0 54 28" ><g fill="none" stroke="#707070" stroke-width="2.1"><rect x="1.6" y="1.6" width="50.8" height="24.8" rx="12.4"/><path d="M10 10 H24 M12.1 14.1 H21.9 M14.1 18.2 H19.9" stroke-width="2.2"/><path d="M33.6 12.4 L38.4 17 L43.2 12.4" stroke-width="2.6" stroke-linecap="round" stroke-linejoin="round"/></g></svg>
<span class="t" style="left:125px;top:1845.5px;font-size:22px;line-height:29px;color:#b1b1b1;font-weight:400;letter-spacing:0.4px;">Filter</span>
<svg style="left:491px;top:1846px;" width="28" height="28" viewBox="0 0 28 28" ><g fill="none" stroke="#707070" stroke-width="2"><circle cx="14" cy="14" r="12"/><path d="M14.6 7 V14.6 H9" stroke-linecap="round" stroke-linejoin="round"/></g></svg>
<svg style="left:526px;top:1846px;" width="28" height="28" viewBox="0 0 28 28" ><g fill="none" stroke="#707070" stroke-width="2"><rect x="1.6" y="1.6" width="24.8" height="24.8" rx="2.4"/><path d="M6 14 H13 M9.5 10.5 V17.5 M16 14 H22" stroke-width="2.2"/></g></svg>
<svg style="left:596px;top:21px;" width="32" height="36" viewBox="0 0 32 36" ><g fill="none" stroke="#7a7a7a" stroke-width="2.1" stroke-linecap="round"><path d="M5.9 5.4 V28.9"/><path d="M25.9 8.2 V11 Q25.9 16.4 19 17.2 L11.5 18.2 Q5.9 19 5.9 23"/></g><g fill="#7a7a7a"><circle cx="5.9" cy="5.4" r="3.7"/><circle cx="25.9" cy="8.2" r="3.7"/><circle cx="5.9" cy="28.9" r="3.7"/></g></svg>
<span class="t" style="left:643px;top:5.5px;font-size:26px;line-height:34px;color:#3b3b3b;font-weight:700;letter-spacing:0.4px;-webkit-text-stroke:0;">CountriesAndCities</span>
<span class="t" style="left:643px;top:37.0px;font-size:22px;line-height:29px;color:#808080;font-weight:400;letter-spacing:1.0px;">many-to-one</span>
<div style="left:1204px;top:16px;width:1194px;height:44px;background:#f1f1f1;border-radius:11px;"></div>
<svg style="left:1222px;top:26.7px;" width="23" height="23" viewBox="0 0 29.4 30" preserveAspectRatio="none"><rect x="0" y="0" width="29.4" height="30" rx="7" fill="#797979"/><g stroke="#ffffff" stroke-width="2.05" stroke-linecap="round" fill="none" opacity="0.96"><path d="M16.2 7.6 L10.5 17"/><path d="M9.2 20.6 L8 22.5"/><path d="M12.9 7.6 L21.5 22.4"/><path d="M5.9 18 H15.8 M19 18 H23.4"/></g></svg>
<span class="t" style="left:1259px;top:23.9px;font-size:22px;line-height:29px;color:#4a4a4a;font-weight:400;letter-spacing:0.65px;">CountriesAndCities</span>
<svg style="left:1472.4px;top:28.9px;" width="8" height="19" viewBox="0 0 8 19" ><path d="M1.6 1.4 L5.4 9.5 L1.6 17.6" fill="none" stroke="#7d7d7d" stroke-width="1.9" stroke-linecap="round" stroke-linejoin="round"/></svg>
<svg style="left:1501px;top:26px;" width="17" height="25" viewBox="0 0 17 25" ><rect x="2" y="1.6" width="13" height="21.6" rx="3.2" fill="#c2c2c2" stroke="#787878" stroke-width="1.9"/><path d="M6.4 4.8 H10.6 M6.6 20.2 H10.4" stroke="#737373" stroke-width="1.5" stroke-linecap="round"/></svg>
<span class="t" style="left:1535px;top:23.9px;font-size:22px;line-height:29px;color:#4a4a4a;font-weight:400;letter-spacing:0.45px;">iPhone 15 Pro</span>
<span class="t" style="right:640.5px;top:23.9px;font-size:22px;line-height:29px;color:#3f3f3f;font-weight:400;letter-spacing:0.6px;">Running CountriesAndCities on iPhone 15 Pro</span>
<svg style="left:2869px;top:25px;" width="26" height="26" viewBox="0 0 26 26" ><path d="M13 2 V24 M2 13 H24" stroke="#5e5e5e" stroke-width="2.4" stroke-linecap="round"/></svg>
<svg style="left:2954px;top:21px;" width="40" height="32" viewBox="0 0 40 32" ><g fill="none" stroke="#6e6e6e" stroke-width="2.2"><rect x="2.1" y="2.5" width="35.8" height="27" rx="5"/><path d="M26 2.5 V29.5"/><path d="M29.6 8.6 H34.6 M29.6 12.9 H34.6 M29.6 17.2 H34.6" stroke-width="1.8"/></g></svg>
<svg style="left:594px;top:91px;" width="28" height="28" viewBox="0 0 28 28" ><g fill="none" stroke="#6e6e6e" stroke-width="1.9"><rect x="2.2" y="2.2" width="9.2" height="9.2"/><rect x="16.3" y="2.2" width="9.2" height="9.2"/><rect x="2.2" y="16.4" width="9.2" height="9.2"/><rect x="16.3" y="16.4" width="9.2" height="9.2"/><path d="M11.4 8 H18.6 M19.9 11.4 V18.4 M9.5 20 H16.3" stroke-width="1.7"/></g></svg>
<div style="left:639px;top:93px;width:2px;height:23px;background:#dadada;"></div>
<svg style="left:655px;top:90px;" width="20" height="30" viewBox="0 0 20 30" ><path d="M16.6 2.6 L3.6 15 L16.6 27.4" fill="none" stroke="#757575" stroke-width="2.5" stroke-linecap="round" stroke-linejoin="round"/></svg>
<svg style="left:695px;top:90px;" width="20" height="30" viewBox="0 0 20 30" ><path d="M3.4 2.6 L16.4 15 L3.4 27.4" fill="none" stroke="#b9b9b9" stroke-width="2.5" stroke-linecap="round" stroke-linejoin="round"/></svg>
<div style="left:2108px;top:78px;width:262px;height:54px;background:#d6e4fb;"></div>
<svg style="left:736px;top:95px;overflow:visible;" width="23" height="21" viewBox="2.3 3.3 18.5 16.7" ><path d="M13.543 3.41c4.114 2.47 6.545 7.162 5.549 11.131-.024.093-.05.181-.076.272l.002.001c2.062 2.538 1.5 5.258 1.236 4.745-1.072-2.086-3.066-1.568-4.088-1.043a6.803 6.803 0 0 1-.281.158l-.02.012-.002.002c-2.115 1.123-4.957 1.205-7.812-.022a12.568 12.568 0 0 1-5.64-4.838c.649.48 1.35.902 2.097 1.252 3.019 1.414 6.051 1.311 8.197-.002C9.651 12.73 7.101 9.67 5.146 7.191a10.628 10.628 0 0 1-1.005-1.384c2.34 2.142 6.038 4.83 7.365 5.576C8.69 8.408 6.208 4.743 6.324 4.86c4.436 4.47 8.528 6.996 8.528 6.996.154.085.27.154.36.213.085-.215.16-.437.224-.668.708-2.588-.09-5.548-1.893-7.992z" fill="#ef7f4e"/></svg>
<span class="t" style="left:771px;top:90.8px;font-size:22px;line-height:29px;color:#262626;font-weight:400;letter-spacing:0.72px;">City</span>
<svg style="left:900px;top:95px;overflow:visible;" width="23" height="21" viewBox="2.3 3.3 18.5 16.7" ><path d="M13.543 3.41c4.114 2.47 6.545 7.162 5.549 11.131-.024.093-.05.181-.076.272l.002.001c2.062 2.538 1.5 5.258 1.236 4.745-1.072-2.086-3.066-1.568-4.088-1.043a6.803 6.803 0 0 1-.281.158l-.02.012-.002.002c-2.115 1.123-4.957 1.205-7.812-.022a12.568 12.568 0 0 1-5.64-4.838c.649.48 1.35.902 2.097 1.252 3.019 1.414 6.051 1.311 8.197-.002C9.651 12.73 7.101 9.67 5.146 7.191a10.628 10.628 0 0 1-1.005-1.384c2.34 2.142 6.038 4.83 7.365 5.576C8.69 8.408 6.208 4.743 6.324 4.86c4.436 4.47 8.528 6.996 8.528 6.996.154.085.27.154.36.213.085-.215.16-.437.224-.668.708-2.588-.09-5.548-1.893-7.992z" fill="#ef7f4e"/></svg>
<span class="t" style="left:935px;top:90.8px;font-size:22px;line-height:29px;color:#262626;font-weight:400;letter-spacing:0.72px;">CountriesListView</span>
<svg style="left:1212px;top:95px;overflow:visible;" width="23" height="21" viewBox="2.3 3.3 18.5 16.7" ><path d="M13.543 3.41c4.114 2.47 6.545 7.162 5.549 11.131-.024.093-.05.181-.076.272l.002.001c2.062 2.538 1.5 5.258 1.236 4.745-1.072-2.086-3.066-1.568-4.088-1.043a6.803 6.803 0 0 1-.281.158l-.02.012-.002.002c-2.115 1.123-4.957 1.205-7.812-.022a12.568 12.568 0 0 1-5.64-4.838c.649.48 1.35.902 2.097 1.252 3.019 1.414 6.051 1.311 8.197-.002C9.651 12.73 7.101 9.67 5.146 7.191a10.628 10.628 0 0 1-1.005-1.384c2.34 2.142 6.038 4.83 7.365 5.576C8.69 8.408 6.208 4.743 6.324 4.86c4.436 4.47 8.528 6.996 8.528 6.996.154.085.27.154.36.213.085-.215.16-.437.224-.668.708-2.588-.09-5.548-1.893-7.992z" fill="#ef7f4e"/></svg>
<span class="t" style="left:1247px;top:90.8px;font-size:22px;line-height:29px;color:#262626;font-weight:400;letter-spacing:0.72px;">AddCityView</span>
<svg style="left:1469.5px;top:93px;" width="20" height="25" viewBox="0 0 20 25" ><path d="M4.6 1.6 H11 L18 8.6 V20.6 Q18 23.2 15.4 23.2 H4.6 Q2 23.2 2 20.6 V4.2 Q2 1.6 4.6 1.6 Z" fill="none" stroke="#5d6c79" stroke-width="2" stroke-linejoin="round"/><path d="M11 1.8 V6.4 Q11 8.6 13.2 8.6 H17.8" fill="none" stroke="#5d6c79" stroke-width="1.8"/></svg>
<span class="t" style="left:1503px;top:90.8px;font-size:22px;line-height:29px;color:#262626;font-weight:400;letter-spacing:0.72px;">No Editor</span>
<svg style="left:1688px;top:95px;overflow:visible;" width="23" height="21" viewBox="2.3 3.3 18.5 16.7" ><path d="M13.543 3.41c4.114 2.47 6.545 7.162 5.549 11.131-.024.093-.05.181-.076.272l.002.001c2.062 2.538 1.5 5.258 1.236 4.745-1.072-2.086-3.066-1.568-4.088-1.043a6.803 6.803 0 0 1-.281.158l-.02.012-.002.002c-2.115 1.123-4.957 1.205-7.812-.022a12.568 12.568 0 0 1-5.64-4.838c.649.48 1.35.902 2.097 1.252 3.019 1.414 6.051 1.311 8.197-.002C9.651 12.73 7.101 9.67 5.146 7.191a10.628 10.628 0 0 1-1.005-1.384c2.34 2.142 6.038 4.83 7.365 5.576C8.69 8.408 6.208 4.743 6.324 4.86c4.436 4.47 8.528 6.996 8.528 6.996.154.085.27.154.36.213.085-.215.16-.437.224-.668.708-2.588-.09-5.548-1.893-7.992z" fill="#ef7f4e"/></svg>
<span class="t" style="left:1722.6px;top:90.8px;font-size:22px;line-height:29px;color:#262626;font-weight:400;letter-spacing:0.72px;">Country</span>
<svg style="left:1894px;top:95px;overflow:visible;" width="23" height="21" viewBox="2.3 3.3 18.5 16.7" ><path d="M13.543 3.41c4.114 2.47 6.545 7.162 5.549 11.131-.024.093-.05.181-.076.272l.002.001c2.062 2.538 1.5 5.258 1.236 4.745-1.072-2.086-3.066-1.568-4.088-1.043a6.803 6.803 0 0 1-.281.158l-.02.012-.002.002c-2.115 1.123-4.957 1.205-7.812-.022a12.568 12.568 0 0 1-5.64-4.838c.649.48 1.35.902 2.097 1.252 3.019 1.414 6.051 1.311 8.197-.002C9.651 12.73 7.101 9.67 5.146 7.191a10.628 10.628 0 0 1-1.005-1.384c2.34 2.142 6.038 4.83 7.365 5.576C8.69 8.408 6.208 4.743 6.324 4.86c4.436 4.47 8.528 6.996 8.528 6.996.154.085.27.154.36.213.085-.215.16-.437.224-.668.708-2.588-.09-5.548-1.893-7.992z" fill="#ef7f4e"/></svg>
<span class="t" style="left:1928.7px;top:90.8px;font-size:22px;line-height:29px;color:#262626;font-weight:400;letter-spacing:0.72px;">Country+City</span>
<svg style="left:2155.5px;top:95px;overflow:visible;" width="23" height="21" viewBox="2.3 3.3 18.5 16.7" ><path d="M13.543 3.41c4.114 2.47 6.545 7.162 5.549 11.131-.024.093-.05.181-.076.272l.002.001c2.062 2.538 1.5 5.258 1.236 4.745-1.072-2.086-3.066-1.568-4.088-1.043a6.803 6.803 0 0 1-.281.158l-.02.012-.002.002c-2.115 1.123-4.957 1.205-7.812-.022a12.568 12.568 0 0 1-5.64-4.838c.649.48 1.35.902 2.097 1.252 3.019 1.414 6.051 1.311 8.197-.002C9.651 12.73 7.101 9.67 5.146 7.191a10.628 10.628 0 0 1-1.005-1.384c2.34 2.142 6.038 4.83 7.365 5.576C8.69 8.408 6.208 4.743 6.324 4.86c4.436 4.47 8.528 6.996 8.528 6.996.154.085.27.154.36.213.085-.215.16-.437.224-.668.708-2.588-.09-5.548-1.893-7.992z" fill="#ef7f4e"/></svg>
<span class="t" style="left:2190.6px;top:90.8px;font-size:22px;line-height:29px;color:#3478f6;font-weight:400;letter-spacing:0.72px;">City+Country</span>
<svg style="left:2418px;top:95px;overflow:visible;" width="23" height="21" viewBox="2.3 3.3 18.5 16.7" ><path d="M13.543 3.41c4.114 2.47 6.545 7.162 5.549 11.131-.024.093-.05.181-.076.272l.002.001c2.062 2.538 1.5 5.258 1.236 4.745-1.072-2.086-3.066-1.568-4.088-1.043a6.803 6.803 0 0 1-.281.158l-.02.012-.002.002c-2.115 1.123-4.957 1.205-7.812-.022a12.568 12.568 0 0 1-5.64-4.838c.649.48 1.35.902 2.097 1.252 3.019 1.414 6.051 1.311 8.197-.002C9.651 12.73 7.101 9.67 5.146 7.191a10.628 10.628 0 0 1-1.005-1.384c2.34 2.142 6.038 4.83 7.365 5.576C8.69 8.408 6.208 4.743 6.324 4.86c4.436 4.47 8.528 6.996 8.528 6.996.154.085.27.154.36.213.085-.215.16-.437.224-.668.708-2.588-.09-5.548-1.893-7.992z" fill="#ef7f4e"/></svg>
<span class="t" style="left:2452.8px;top:90.8px;font-size:22px;line-height:29px;color:#262626;font-weight:400;letter-spacing:0.72px;">CountriesListViewModel</span>
<svg style="left:2794.6px;top:95px;overflow:visible;" width="23" height="21" viewBox="2.3 3.3 18.5 16.7" ><path d="M13.543 3.41c4.114 2.47 6.545 7.162 5.549 11.131-.024.093-.05.181-.076.272l.002.001c2.062 2.538 1.5 5.258 1.236 4.745-1.072-2.086-3.066-1.568-4.088-1.043a6.803 6.803 0 0 1-.281.158l-.02.012-.002.002c-2.115 1.123-4.957 1.205-7.812-.022a12.568 12.568 0 0 1-5.64-4.838c.649.48 1.35.902 2.097 1.252 3.019 1.414 6.051 1.311 8.197-.002C9.651 12.73 7.101 9.67 5.146 7.191a10.628 10.628 0 0 1-1.005-1.384c2.34 2.142 6.038 4.83 7.365 5.576C8.69 8.408 6.208 4.743 6.324 4.86c4.436 4.47 8.528 6.996 8.528 6.996.154.085.27.154.36.213.085-.215.16-.437.224-.668.708-2.588-.09-5.548-1.893-7.992z" fill="#ef7f4e"/></svg>
<span class="t" style="left:2829px;top:90.8px;font-size:22px;line-height:29px;color:#262626;font-weight:400;letter-spacing:0.72px;">CountriesListViewModel</span>
<div style="left:850px;top:93px;width:2px;height:23px;background:#dadada;"></div>
<div style="left:1161.8px;top:93px;width:2px;height:23px;background:#dadada;"></div>
<div style="left:1418px;top:93px;width:2px;height:23px;background:#dadada;"></div>
<div style="left:1638px;top:93px;width:2px;height:23px;background:#dadada;"></div>
<div style="left:1844px;top:93px;width:2px;height:23px;background:#dadada;"></div>
<div style="left:2744px;top:93px;width:2px;height:23px;background:#dadada;"></div>
<div style="left:578px;top:78px;width:151px;height:54px;background:#fff;"></div>
<div style="left:729px;top:78px;width:14px;height:54px;background:linear-gradient(90deg,#c9c9c9 0,#c9c9c9 1.5px,rgba(225,225,225,.9) 2px,rgba(255,255,255,0) 100%);"></div>
<svg style="left:594px;top:91px;" width="28" height="28" viewBox="0 0 28 28" ><g fill="none" stroke="#6e6e6e" stroke-width="1.9"><rect x="2.2" y="2.2" width="9.2" height="9.2"/><rect x="16.3" y="2.2" width="9.2" height="9.2"/><rect x="2.2" y="16.4" width="9.2" height="9.2"/><rect x="16.3" y="16.4" width="9.2" height="9.2"/><path d="M11.4 8 H18.6 M19.9 11.4 V18.4 M9.5 20 H16.3" stroke-width="1.7"/></g></svg>
<div style="left:639px;top:93px;width:2px;height:23px;background:#dadada;"></div>
<svg style="left:655px;top:90px;" width="20" height="30" viewBox="0 0 20 30" ><path d="M16.6 2.6 L3.6 15 L16.6 27.4" fill="none" stroke="#757575" stroke-width="2.5" stroke-linecap="round" stroke-linejoin="round"/></svg>
<svg style="left:695px;top:90px;" width="20" height="30" viewBox="0 0 20 30" ><path d="M3.4 2.6 L16.4 15 L3.4 27.4" fill="none" stroke="#b9b9b9" stroke-width="2.5" stroke-linecap="round" stroke-linejoin="round"/></svg>
<div style="left:2834px;top:78px;width:10px;height:54px;background:linear-gradient(270deg,#c6c6c6 0,#c6c6c6 1.5px,rgba(228,228,228,.85) 2px,rgba(255,255,255,0) 100%);"></div>
<div style="left:2844px;top:78px;width:180px;height:54px;background:#fff;"></div>
<svg style="left:2858px;top:90px;" width="28" height="30" viewBox="0 0 28 30" ><g fill="none" stroke="#7a7a7a" stroke-width="2" stroke-linecap="round" stroke-linejoin="round"><path d="M3 9.6 H24.6 M18 3 L24.6 9.6 L18 16"/><path d="M25 20.4 H3.4 M10 13.8 L3.4 20.4 L10 27"/></g></svg>
<svg style="left:2905px;top:91px;" width="38" height="28" viewBox="0 0 38 28" ><g fill="none" stroke="#7a7a7a" stroke-width="2"><path d="M1.4 3 H17 M1.4 10.2 H17 M1.4 17.4 H17 M1.4 24.6 H17"/><rect x="22" y="2.6" width="14" height="22.6"/><rect x="26.4" y="6.6" width="5.2" height="14.6" stroke-width="1.8"/></g></svg>
<div style="left:2960px;top:93px;width:2px;height:23px;background:#dadada;"></div>
<svg style="left:2979px;top:91px;" width="28" height="28" viewBox="0 0 28 28" ><g fill="none" stroke="#7a7a7a" stroke-width="2" stroke-linecap="round"><rect x="2.4" y="2.4" width="23.2" height="23.2" rx="4"/><path d="M10 2.4 V25.6" stroke-linecap="butt"/><path d="M13.8 14 H22 M17.9 9.9 V18.1"/></g></svg>
<svg style="left:594px;top:147.6px;" width="25" height="25.4" viewBox="0 0 29.4 30" preserveAspectRatio="none"><rect x="0" y="0" width="29.4" height="30" rx="7" fill="#1a80fb"/><rect x="2.7" y="2.9" width="24" height="24.2" rx="4.4" fill="none" stroke="#ffffff" stroke-width="1.5" opacity="0.56"/><g stroke="#ffffff" stroke-width="2.05" stroke-linecap="round" fill="none" opacity="0.96"><path d="M16.2 7.6 L10.5 17"/><path d="M9.2 20.6 L8 22.5"/><path d="M12.9 7.6 L21.5 22.4"/><path d="M5.9 18 H15.8 M19 18 H23.4"/></g></svg>
<span class="t" style="left:632px;top:146.5px;font-size:22px;line-height:29px;color:#262626;font-weight:400;letter-spacing:0.65px;">CountriesAndCities</span>
<svg style="left:845px;top:151.5px;" width="8" height="19" viewBox="0 0 8 19" ><path d="M1.6 1.4 L5.4 9.5 L1.6 17.6" fill="none" stroke="#7d7d7d" stroke-width="1.9" stroke-linecap="round" stroke-linejoin="round"/></svg>
<svg style="left:870.5px;top:150px;" width="24.5" height="20" viewBox="0 0 30 24" ><path d="M0 4.2 Q0 0.6 3.6 0.6 L9.2 0.6 Q11 0.6 12.2 1.9 L13.2 3 Q13.8 3.6 14.8 3.6 L26.4 3.6 Q30 3.6 30 7.2 L30 8 L0 8 Z" fill="#8e9399"/><path d="M0 10 L30 10 L30 20.4 Q30 24 26.4 24 L3.6 24 Q0 24 0 20.4 Z" fill="#8e9399"/></svg>
<span class="t" style="left:907.7px;top:146.5px;font-size:22px;line-height:29px;color:#262626;font-weight:400;letter-spacing:0.65px;">CountriesAndCities</span>
<svg style="left:1120.6px;top:151.5px;" width="8" height="19" viewBox="0 0 8 19" ><path d="M1.6 1.4 L5.4 9.5 L1.6 17.6" fill="none" stroke="#7d7d7d" stroke-width="1.9" stroke-linecap="round" stroke-linejoin="round"/></svg>
<svg style="left:1146.4px;top:150px;" width="24.5" height="20" viewBox="0 0 30 24" ><path d="M0 4.2 Q0 0.6 3.6 0.6 L9.2 0.6 Q11 0.6 12.2 1.9 L13.2 3 Q13.8 3.6 14.8 3.6 L26.4 3.6 Q30 3.6 30 7.2 L30 8 L0 8 Z" fill="#8e9399"/><path d="M0 10 L30 10 L30 20.4 Q30 24 26.4 24 L3.6 24 Q0 24 0 20.4 Z" fill="#8e9399"/></svg>
<span class="t" style="left:1184px;top:146.5px;font-size:22px;line-height:29px;color:#262626;font-weight:400;letter-spacing:0.65px;">Model</span>
<svg style="left:1259px;top:151.5px;" width="8" height="19" viewBox="0 0 8 19" ><path d="M1.6 1.4 L5.4 9.5 L1.6 17.6" fill="none" stroke="#7d7d7d" stroke-width="1.9" stroke-linecap="round" stroke-linejoin="round"/></svg>
<svg style="left:1285px;top:150px;overflow:visible;" width="24" height="21.6" viewBox="2.3 3.3 18.5 16.7" ><path d="M13.543 3.41c4.114 2.47 6.545 7.162 5.549 11.131-.024.093-.05.181-.076.272l.002.001c2.062 2.538 1.5 5.258 1.236 4.745-1.072-2.086-3.066-1.568-4.088-1.043a6.803 6.803 0 0 1-.281.158l-.02.012-.002.002c-2.115 1.123-4.957 1.205-7.812-.022a12.568 12.568 0 0 1-5.64-4.838c.649.48 1.35.902 2.097 1.252 3.019 1.414 6.051 1.311 8.197-.002C9.651 12.73 7.101 9.67 5.146 7.191a10.628 10.628 0 0 1-1.005-1.384c2.34 2.142 6.038 4.83 7.365 5.576C8.69 8.408 6.208 4.743 6.324 4.86c4.436 4.47 8.528 6.996 8.528 6.996.154.085.27.154.36.213.085-.215.16-.437.224-.668.708-2.588-.09-5.548-1.893-7.992z" fill="#ef7f4e"/></svg>
<span class="t" style="left:1321.8px;top:146.5px;font-size:22px;line-height:29px;color:#262626;font-weight:400;letter-spacing:0.65px;">City+Country</span>
<svg style="left:1471.4px;top:151.5px;" width="8" height="19" viewBox="0 0 8 19" ><path d="M1.6 1.4 L5.4 9.5 L1.6 17.6" fill="none" stroke="#7d7d7d" stroke-width="1.9" stroke-linecap="round" stroke-linejoin="round"/></svg>
<div style="left:1495px;top:146px;width:27.6px;height:27.6px;background:#c05bdc;border-radius:6.5px;"></div>
<span class="t" style="left:1495px;top:146.3px;font-size:21px;line-height:27px;color:#ffffff;font-weight:700;letter-spacing:0px;width:27.6px;text-align:center;-webkit-text-stroke:0;">S</span>
<span class="t" style="left:1533.8px;top:146.5px;font-size:22px;line-height:29px;color:#262626;font-weight:400;letter-spacing:0.65px;">CityCountry</span>
<div style="left:577px;top:632px;width:2417px;height:44px;background:#ecf3fe;"></div>
<div style="left:683px;top:194px;width:14px;height:259px;background:#e8e8e8;border-radius:7px;"></div>
<div style="left:683px;top:634px;width:14px;height:479px;background:#e8e8e8;border-radius:7px;"></div>
<div style="left:683px;top:634px;width:14px;height:42px;background:#d8dde4;border-radius:7px 7px 0 0;"></div>
<div style="left:683px;top:898px;width:14px;height:172px;background:#d0d0d0;border-radius:7px;"></div>
<div style="left:591px;top:545px;width:10px;height:570px;box-sizing:border-box;background:#a9c7fb;border:2px solid #3b7cf5;border-radius:5px;"></div>
<span class="ln" style="top:192.9px;">1</span>
<span class="code" style="top:192px;"><span class="c">//</span></span>
<span class="ln" style="top:236.9px;">2</span>
<span class="code" style="top:236px;"><span class="c">//  City+Country.swift</span></span>
<span class="ln" style="top:280.9px;">3</span>
<span class="code" style="top:280px;"><span class="c">//  CountriesAndCities</span></span>
<span class="ln" style="top:324.9px;">4</span>
<span class="code" style="top:324px;"><span class="c">//</span></span>
<span class="ln" style="top:368.9px;">5</span>
<span class="code" style="top:368px;"><span class="c">//  Created by Russell Gordon on 2024-06-08.</span></span>
<span class="ln" style="top:412.9px;">6</span>
<span class="code" style="top:412px;"><span class="c">//</span></span>
<span class="ln" style="top:456.9px;">7</span>
<span class="ln" style="top:500.9px;">8</span>
<span class="code" style="top:500px;"><b>import</b> Foundation</span>
<span class="ln" style="top:544.9px;">9</span>
<span class="ln" style="top:588.9px;">10</span>
<span class="code" style="top:588px;"><span class="c">// An instance of this structure stores one city</span></span>
<span class="ln" style="top:632.9px;color:#1f1f1f;">11</span>
<span class="code" style="top:632px;"><b>struct</b> <span class="d">CityCountry</span>: <span class="s">Identifiable</span>, <span class="s">Codable</span> {</span>
<span class="ln" style="top:676.9px;">12</span>
<span class="ln" style="top:720.9px;">13</span>
<span class="code" style="top:720px;">    <b>var</b> <span class="d">id</span>: <span class="s">Int</span>?</span>
<span class="ln" style="top:764.9px;">14</span>
<span class="code" style="top:764px;">    <b>let</b> <span class="d">name</span>: <span class="s">String</span></span>
<span class="ln" style="top:808.9px;">15</span>
<span class="code" style="top:808px;">    <b>let</b> <span class="d">country</span>: <span class="p">Country</span></span>
<span class="ln" style="top:852.9px;">16</span>
<span class="ln" style="top:896.9px;">17</span>
<span class="code" style="top:896px;">    <b>struct</b> <span class="d">Country</span>: <span class="s">Identifiable</span>, <span class="s">Codable</span> {</span>
<span class="ln" style="top:940.9px;">18</span>
<span class="code" style="top:940px;">        <b>let</b> <span class="d">id</span>: <span class="s">Int</span></span>
<span class="ln" style="top:984.9px;">19</span>
<span class="code" style="top:984px;">        <b>let</b> <span class="d">name</span>: <span class="s">String</span></span>
<span class="ln" style="top:1028.9px;">20</span>
<span class="code" style="top:1028px;">    }</span>
<span class="ln" style="top:1072.9px;">21</span>
<span class="code" style="top:1072px;">}</span>
<span class="ln" style="top:1116.9px;">22</span>
<div style="left:2994px;top:190px;width:30px;height:1642px;box-sizing:border-box;background:#fafafa;border-left:1.5px solid #e8e8e8;border-right:1.5px solid #ededed;"></div>
<div style="left:3002px;top:196px;width:16px;height:1508px;background:#7f7f7f;border-radius:8px;"></div>
<svg style="left:599px;top:1851px;" width="32" height="20" viewBox="0 0 32 20" ><path d="M4 1 H21.6 Q23.4 1 24.4 2.4 L29.2 8.8 Q30 10 29.2 11.2 L24.4 17.6 Q23.4 19 21.6 19 H4 Q1 19 1 16 V4 Q1 1 4 1 Z" fill="#3478f6"/></svg>
<div style="left:645px;top:1850px;width:2px;height:23px;background:#dcdcdc;"></div>
<svg style="left:666px;top:1846px;" width="22" height="30" viewBox="0 0 22 30" ><g fill="none" stroke="#737373" stroke-width="2"><rect x="2.2" y="2.4" width="4.6" height="24.6" rx="1.6"/><rect x="14.2" y="2.4" width="4.6" height="24.6" rx="1.6"/></g></svg>
<svg style="left:722px;top:1848px;" width="32" height="28" viewBox="0 0 32 28" ><g fill="none" stroke="#c2c2c2" stroke-width="2" stroke-linejoin="round" stroke-linecap="round"><path d="M2.6 16.6 L14.6 5 L27 16.4"/><path d="M27.6 9 V16.8 H19.8"/><rect x="7.4" y="21" width="15.6" height="4.2" stroke-linejoin="miter"/></g></svg>
<svg style="left:786px;top:1846px;" width="22" height="30" viewBox="0 0 22 30" ><g fill="none" stroke="#c2c2c2" stroke-width="2" stroke-linejoin="round" stroke-linecap="round"><path d="M11 2.4 V18.6 M4.6 12.4 L11 18.8 L17.4 12.4"/><rect x="2.6" y="23.2" width="16.8" height="4.2" stroke-linejoin="miter"/></g></svg>
<svg style="left:846px;top:1846px;" width="22" height="30" viewBox="0 0 22 30" ><g fill="none" stroke="#c2c2c2" stroke-width="2" stroke-linejoin="round" stroke-linecap="round"><path d="M11 19 V3 M4.6 9.2 L11 2.8 L17.4 9.2"/><rect x="2.6" y="23.2" width="16.8" height="4.2" stroke-linejoin="miter"/></g></svg>
<div style="left:887px;top:1850px;width:2px;height:23px;background:#dcdcdc;"></div>
<svg style="left:906px;top:1846px;" width="26" height="30" viewBox="0 0 26 30" ><g fill="none" stroke="#737373" stroke-width="2" stroke-linejoin="round" stroke-linecap="round"><path d="M11 9.4 L23 4.6 V22 L11 27 Z" stroke-width="2.2"/><path d="M7 24.6 V7.6 L18.6 3"/><path d="M3 22.4 V5.6 L14.4 1.4"/></g></svg>
<svg style="left:964px;top:1846px;" width="30" height="30" viewBox="0 0 30 30" ><g fill="none" stroke="#737373" stroke-width="2.1"><circle cx="6.4" cy="6.4" r="4"/><circle cx="6.4" cy="23" r="4"/><circle cx="23" cy="14.8" r="4"/><path d="M10 8.2 L19.4 13 M10 21.2 L19.4 16.6"/></g></svg>
<svg style="left:1026px;top:1846px;" width="26" height="30" viewBox="0 0 26 30" ><g fill="none" stroke="#737373" stroke-width="2.1"><rect x="2" y="2.4" width="21.6" height="10.6" rx="5.3"/><rect x="2" y="16.4" width="21.6" height="10.6" rx="5.3"/></g><circle cx="7.6" cy="7.7" r="2.9" fill="#737373"/><circle cx="18" cy="21.7" r="2.9" fill="#737373"/></svg>
<svg style="left:1085px;top:1846px;" width="30" height="30" viewBox="0 0 30 30" ><path d="M25.6 2.8 L2.8 12.2 L13 15 L15.4 25.8 Z" fill="none" stroke="#737373" stroke-width="2.1" stroke-linejoin="round"/></svg>
<div style="left:1129px;top:1850px;width:2px;height:23px;background:#dcdcdc;"></div>
<svg style="left:1148.6px;top:1848.4px;" width="24" height="24" viewBox="0 0 29.4 30" preserveAspectRatio="none"><rect x="0" y="0" width="29.4" height="30" rx="7" fill="#797979"/><g stroke="#ffffff" stroke-width="2.05" stroke-linecap="round" fill="none" opacity="0.96"><path d="M16.2 7.6 L10.5 17"/><path d="M9.2 20.6 L8 22.5"/><path d="M12.9 7.6 L21.5 22.4"/><path d="M5.9 18 H15.8 M19 18 H23.4"/></g></svg>
<span class="t" style="left:1186px;top:1846.5px;font-size:22px;line-height:29px;color:#262626;font-weight:400;letter-spacing:0.65px;">CountriesAndCities</span>
<span class="t" style="right:88.5px;top:1846.5px;font-size:22px;line-height:29px;color:#808080;font-weight:400;letter-spacing:1.0px;-webkit-text-stroke:0.25px;">Line: 11  Col: 5</span>
<div style="left:2954px;top:1849px;width:2px;height:23px;background:#dcdcdc;"></div>
<svg style="left:2972px;top:1847px;" width="28" height="28" viewBox="0 0 28 28" ><rect x="2.3" y="2.6" width="23.5" height="23.1" rx="4.8" fill="none" stroke="#777" stroke-width="2.1"/><rect x="5.2" y="17.1" width="17.6" height="5.9" rx="2.2" fill="#7f7f7f"/></svg>
</div></body></html>
